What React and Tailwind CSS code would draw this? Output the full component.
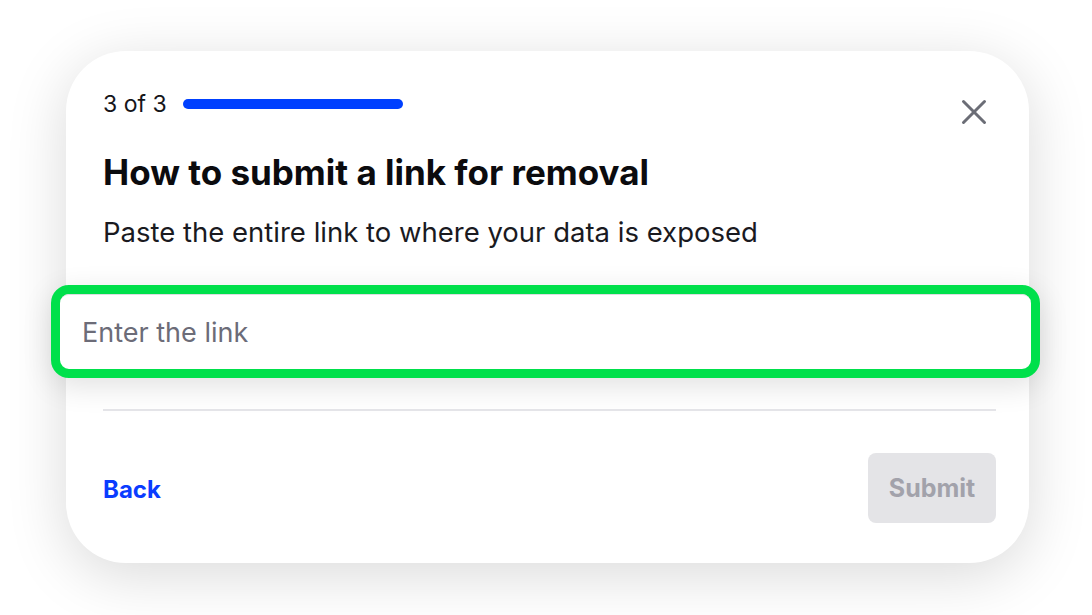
import React from 'react';

function CloseIcon() {
  return (
    <svg width="26" height="26" viewBox="0 0 26 26" fill="none" stroke="#6b6d76" strokeWidth="3" strokeLinecap="round">
      <path d="M2.5 2.5 L23.5 23.5" />
      <path d="M23.5 2.5 L2.5 23.5" />
    </svg>
  );
}

export default function App() {
  return (
    <div className="w-[1092px] h-[615px] bg-white pl-[66px] pt-[51px]" style={{ fontFamily: 'Inter, "Noto Sans", sans-serif' }}>
      <div className="w-[963px] h-[512px] bg-white rounded-[60px] shadow-[0_12px_60px_rgba(0,0,0,0.15)] pl-[37px] pr-[33px] flex flex-col">
        <div className="flex items-start justify-between pt-[39px]">
          <div className="h-[28px] flex items-center gap-[16px]">
            <span className="text-[23px] text-[#16161a] leading-none">3 of 3</span>
            <div className="w-[220px] h-[10px] rounded-full bg-[#0040ff]" />
          </div>
          <div className="mt-[9px] mr-[9px]">
            <CloseIcon />
          </div>
        </div>

        <h1 className="mt-[26px] text-[35px] font-bold text-[#0b0b0e] leading-[42px]">
          How to submit a link for removal
        </h1>
        <p className="mt-[22px] text-[27.5px] text-[#1a1a1f] leading-[34px]">
          Paste the entire link to where your data is exposed
        </p>

        <div className="mt-[36px] -ml-[52px] -mr-[44px] rounded-[18px] border-[9px] border-[#00e04b] shadow-[0_8px_30px_rgba(0,0,0,0.12)] bg-white">
          <div className="h-[75px] border-t border-[#dcdce0] rounded-[9px] flex items-center pl-[22px] pt-[3px] text-[27px] text-[#6c6c78]">
            Enter the link
          </div>
        </div>

        <div className="mt-[31px] h-[2px] bg-[#e4e4e8]" />

        <div className="flex items-center justify-between mt-[42px]">
          <span className="text-[24px] font-bold text-[#0a3cff] pt-[3px]">Back</span>
          <button className="w-[128px] h-[70px] rounded-[8px] bg-[#e4e4e7] text-[25px] font-bold text-[#a2a2ab] pt-[2px]">
            Submit
          </button>
        </div>
      </div>
    </div>
  );
}
